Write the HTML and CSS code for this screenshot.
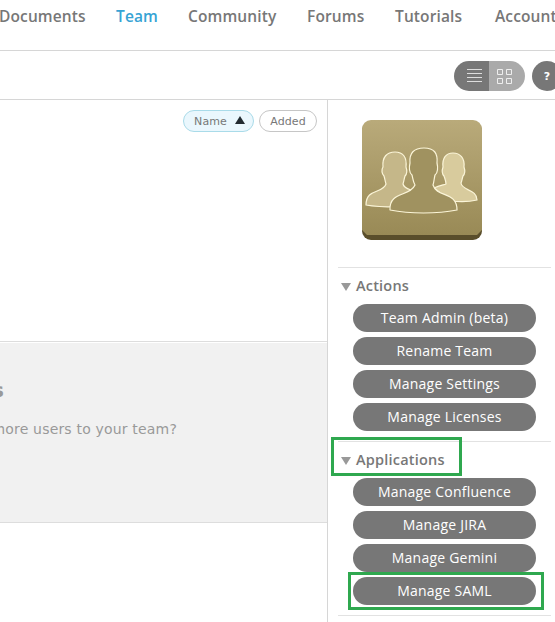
FILE: index.html
```html
<!DOCTYPE html>
<html lang="en">
<head>
<meta charset="utf-8">
<title>Team</title>
<link rel="stylesheet" href="styles.css">
</head>
<body>
<nav class="nav">
  <a class="documents">Documents</a><a class="team">Team</a><a class="community">Community</a><a class="forums">Forums</a><a class="tutorials">Tutorials</a><a class="account">Account</a>
</nav>
<div class="toolbar">
  <div class="views">
    <span class="view list"><svg width="15" height="14" viewBox="0 0 15 14"><path d="M0 .5h15M0 4.5h15M0 8.5h15M0 12.5h15" stroke="#ddd"/></svg></span>
    <span class="view tiles"><svg width="15" height="15" viewBox="0 0 15 15"><path d="M.5.5h5v5h-5zM9.500.5h5v5h-5zM.5 9.500h5v5h-5zM9.500 9.500h5v5h-5z" fill="none" stroke="#eee"/></svg></span>
  </div>
  <span class="help">?</span>
</div>
<div class="body">
  <main class="main">
    <div class="sort">
      <span class="chip active">Name <svg width="10" height="8" viewBox="0 0 10 8"><path d="M5 0l5 8H0z" fill="#222b30"/></svg></span>
      <span class="chip">Added</span>
    </div>
    <section class="invite">
      <h2>s</h2>
      <p>more users to your team?</p>
    </section>
  </main>
  <aside class="side">
    <svg class="avatar" width="120" height="120" viewBox="0 0 120 120">
      <defs>
        <linearGradient id="gold" x1="0" y1="0" x2="0" y2="1"><stop offset="0" stop-color="#b9aa7a"/><stop offset="1" stop-color="#998a56"/></linearGradient>
      </defs>
      <rect y="2" width="120" height="118" rx="9" fill="#5a4e2b"/>
      <path d="M9 0h102a9 9 0 0 1 9 9v101l-5 5H5l-5-5V9a9 9 0 0 1 9-9z" fill="url(#gold)"/>
      <g stroke="#fbf5d8" stroke-width="1.200" stroke-linejoin="round">
        <path fill="#d8cb9d" d="M84 64c0-3-1-5-2-8-2-2-2-6-1-9-1-9 3-14 10-14s12 5 11 14c1 3 1 7-1 9-1 3-1 5-2 7 1 8 16 6 16 17-8 2-18 2-26 1l-17-13c5-2 9-3 12-4z"/>
        <path fill="#c5b789" d="M24 64c-1-3-1-5-2-8-2-2-3-6-1-9-1-10 4-15 12-15s12 5 11 15c1 3 1 7-1 9-1 3-1 5-2 8 1 4 5 5 8 6L35 87c-10 0-20 0-31-2 0-17 17-11 20-21z"/>
        <path fill="#a09260" d="M53 65c-2-3-2-6-3-10-3-2-3-8-2-12-1-10 4-15 14-15s14 5 13 15c1 4 1 10-2 12-1 4-1 7-2 10 4 13 24 6 24 25-20 4-47 4-67 0-1-19 20-13 25-25z"/>
      </g>
    </svg>
    <section class="group actions">
      <h3><span>Actions</span></h3>
      <a class="button">Team Admin (beta)</a>
      <a class="button">Rename Team</a>
      <a class="button">Manage Settings</a>
      <a class="button">Manage Licenses</a>
    </section>
    <section class="group apps">
      <h3 class="marked"><span>Applications</span></h3>
      <a class="button">Manage Confluence</a>
      <a class="button">Manage JIRA</a>
      <a class="button">Manage Gemini</a>
      <a class="button marked">Manage SAML</a>
    </section>
  </aside>
</div>
</body>
</html>
```
FILE: styles.css
```css
*, *::before, *::after { box-sizing: border-box; }
body {
  margin: 0;
  height: 622px;
  overflow: hidden;
  background: #fff;
  color: #777;
  font-family: "Open Sans", "Noto Sans", sans-serif;
}
svg { display: block; }
.nav {
  display: flex;
  height: 51px;
  padding-top: 5px;
  border-bottom: 1px solid #d6d6d6;
  font-size: 15.5px;
  font-weight: 600;
  line-height: 22px;
  white-space: nowrap;
}
.nav a { flex: none; letter-spacing: .12px; }
.nav .documents { width: 117px; margin-left: -1px; }
.nav .team { width: 72px; color: #36a3d4; }
.nav .community { width: 119px; }
.nav .forums { width: 88px; }
.nav .tutorials { width: 100px; }
.toolbar {
  display: flex;
  gap: 7px;
  height: 49px;
  padding: 10px 0 0 454px;
  border-bottom: 1px solid #d6d6d6;
}
.views { display: flex; flex: none; height: 30px; border-radius: 15px; overflow: hidden; }
.view { display: flex; align-items: center; }
.list { width: 35px; padding-left: 13px; background: #777; }
.tiles { width: 36px; padding-left: 8px; background: #aaa; }
.help {
  flex: none;
  width: 30px;
  height: 30px;
  border-radius: 15px;
  background: #777;
  color: #fff;
  font: bold 11px/31px "DejaVu Sans", sans-serif;
  text-align: center;
}
.body { display: flex; height: 522px; }
.main {
  width: 328px;
  flex: none;
  border-right: 1px solid #d6d6d6;
  font-family: "DejaVu Sans", Verdana, sans-serif;
}
.sort { display: flex; justify-content: flex-end; gap: 5px; height: 241px; padding: 10px 10px 0 0; }
.chip {
  display: flex;
  align-items: center;
  justify-content: center;
  gap: 8px;
  width: 58px;
  height: 22px;
  padding-top: 1px;
  border: 1px solid #c6c6c6;
  border-radius: 11px;
  font-size: 11px;
  letter-spacing: .1px;
}
.chip.active { width: 71px; padding-left: 2px; border-color: #a9dbe9; background: #eaf7fd; }
.chip svg { margin-top: -3px; }
.invite {
  height: 182px;
  padding-top: 36px;
  border-top: 1px solid #ddd;
  border-bottom: 1px solid #ddd;
  background: #f1f1f1;
  box-shadow: inset 0 1px #fff;
  color: #999;
  overflow: hidden;
}
.invite h2 { width: 4px; margin: 0; direction: rtl; font-size: 20px; line-height: 24px; }
.invite p {
  display: flex;
  justify-content: flex-end;
  width: 177px;
  margin: 17px 0 0;
  font-size: 14px;
  letter-spacing: .18px;
  line-height: 20px;
  white-space: nowrap;
}
.side { flex: none; width: 227px; padding: 20px 4px 0 10px; }
.avatar { margin: 0 0 27px 24px; }
.group {
  display: flex;
  flex-direction: column;
  align-items: flex-start;
  gap: 5px;
  height: 174px;
  border-top: 1px solid #e2e2e2;
}
.apps { border-bottom: 1px solid #e2e2e2; height: 175px; }
.group h3 {
  display: flex;
  align-items: center;
  gap: 5px;
  position: relative;
  height: 31px;
  margin: 0;
  padding: 4px 0 0 3px;
  font-size: 14.5px;
  font-weight: 600;
  letter-spacing: .2px;
}
.group h3::before {
  content: "";
  margin-top: 2px;
  border: 5px solid transparent;
  border-top: 8px solid #999;
  border-bottom: 0;
}
.button {
  flex: none;
  position: relative;
  width: 183px;
  height: 28px;
  margin-left: 15px;
  border-radius: 14px;
  background: #777;
  color: #fff;
  font-size: 14px;
  letter-spacing: .22px;
  line-height: 28px;
  text-align: center;
}
.marked::after { content: ""; position: absolute; border: 3px solid #2fa84f; }
h3.marked::after { left: -7px; top: -5px; width: 131px; height: 39px; }
.button.marked::after { left: -5px; top: -5px; width: 196px; height: 38px; }
```
